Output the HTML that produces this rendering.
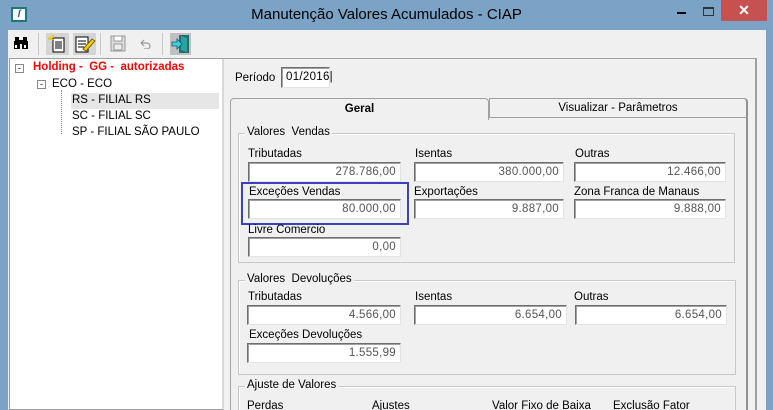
<!DOCTYPE html>
<html><head><meta charset="utf-8"><style>
*{margin:0;padding:0;box-sizing:border-box}
html,body{width:773px;height:410px;overflow:hidden}
body{background:#7aa3c5;font-family:"Liberation Sans",sans-serif;font-size:11.5px;color:#000;position:relative}
#w{position:absolute;left:0;top:0;width:773px;height:410px;overflow:hidden}
.a{position:absolute}
.inp{position:absolute;background:#fff;border-top:1px solid #6e6e6e;border-left:1px solid #6e6e6e;border-right:1px solid #e3e3e3;border-bottom:1px solid #e3e3e3;box-shadow:inset 1px 1px 0 #a0a0a0;height:20px;text-align:right;padding-right:4px;line-height:18px;color:#555;font-family:"Liberation Sans",sans-serif;letter-spacing:0.3px}
.grp{position:absolute;border:1px solid #c8c8c8;box-shadow:1px 1px 0 #fff inset}
.gl{position:absolute;background:#f0f0f0;padding:0 2px;top:-8px;left:6px}
.lb{position:absolute}
</style></head><body><div id="w">
<div class="a" style="left:0;top:0;width:773px;height:30px;background:#7aa3c5"></div>
<div class="a" style="left:11px;top:7px;width:16px;height:15px;background:#fff;border:2px solid #1e7a7a;font-weight:bold;font-style:italic;font-size:10px;color:#1e6b7a;text-align:center;line-height:11px">ſ</div>
<div class="a" style="left:0;top:6px;width:773px;text-align:center;font-size:15px;color:#000">Manutenção Valores Acumulados - CIAP</div>
<div class="a" style="left:677px;top:12px;width:9px;height:2px;background:#000"></div>
<div class="a" style="left:703px;top:7px;width:11px;height:9px;border:1px solid #333;border-top-width:2px"></div>
<div class="a" style="left:721px;top:0;width:46px;height:21px;background:#c75050;color:#fff;text-align:center;font-size:14px;line-height:21px;font-weight:bold">✕</div>
<div class="a" style="left:8px;top:30px;width:758px;height:380px;background:#f0f0f0"></div>
<svg class="a" style="left:13px;top:35px" width="16" height="16"><rect x="1" y="6" width="6" height="8" fill="#000"/><rect x="9" y="6" width="6" height="8" fill="#000"/><rect x="2" y="2" width="4" height="5" fill="#000"/><rect x="10" y="2" width="4" height="5" fill="#000"/><rect x="6" y="5" width="4" height="4" fill="#000"/><rect x="2" y="10" width="2" height="3" fill="#fff"/><rect x="11" y="10" width="2" height="3" fill="#fff"/></svg>
<div class="a" style="left:38px;top:33px;width:1px;height:22px;background:#c8c8c8"></div>
<div class="a" style="left:46px;top:33px;width:23px;height:22px;background:#d4d4d4"></div>
<svg class="a" style="left:48px;top:35px" width="20" height="18"><rect x="5" y="3" width="11" height="14" fill="#fff" stroke="#000"/><path d="M7 7h7M7 9h7M7 11h7M7 13h7" stroke="#000"/><path d="M2 2l3 3M5 0v3M0 4h3" stroke="#e8c000" stroke-width="1.5"/></svg>
<div class="a" style="left:73px;top:33px;width:23px;height:22px;background:#d4d4d4"></div>
<svg class="a" style="left:74px;top:35px" width="22" height="18"><rect x="2" y="2" width="12" height="15" fill="#fff" stroke="#000"/><path d="M4 6h8M4 9h8M4 12h6" stroke="#000"/><path d="M9 14l9-10 3 2-9 10z" fill="#f0d000" stroke="#806000"/></svg>
<div class="a" style="left:100px;top:33px;width:1px;height:22px;background:#c8c8c8"></div>
<svg class="a" style="left:110px;top:35px" width="16" height="17"><rect x="1" y="1" width="14" height="15" fill="#ddd" stroke="#999"/><rect x="4" y="1" width="8" height="5" fill="#fff" stroke="#999"/><rect x="4" y="9" width="8" height="6" fill="#eee" stroke="#999"/></svg>
<svg class="a" style="left:138px;top:37px" width="14" height="12"><path d="M3 6h6a3 3 0 0 1 0 6H6M3 6l3-3M3 6l3 3" fill="none" stroke="#999" stroke-width="1.2"/></svg>
<div class="a" style="left:162px;top:33px;width:1px;height:22px;background:#c8c8c8"></div>
<div class="a" style="left:170px;top:33px;width:21px;height:22px;background:#c0c0c0"></div>
<svg class="a" style="left:171px;top:34px" width="20" height="20"><rect x="8" y="1" width="10" height="18" fill="#207070"/><path d="M10 2l6 2v14l-6-2z" fill="#30a0a0"/><path d="M1 8h5V5l5 5-5 5v-3H1z" fill="#40d0e0" stroke="#006070" stroke-width="0.8"/></svg>
<div class="a" style="left:9px;top:58px;width:215px;height:352px;background:#fff;border:1px solid #a0a0a0;border-right:2px solid #d8d8d8"></div>
<div class="a" style="left:15px;top:64px;width:9px;height:9px;border:1px solid #888;background:#fff;font-size:9px;line-height:6px;text-align:center">-</div>
<div class="a" style="left:33px;top:61px;color:#ff0000;font-weight:bold;font-size:11.5px">Holding -&nbsp; GG -&nbsp; autorizadas</div>
<div class="a" style="left:37px;top:80px;width:9px;height:9px;border:1px solid #888;background:#fff;font-size:9px;line-height:6px;text-align:center">-</div>
<div class="a" style="left:52px;top:78px">ECO - ECO</div>
<div class="a" style="left:61px;top:90px;width:1px;height:44px;border-left:1px dotted #888"></div>
<div class="a" style="left:71px;top:93px;width:148px;height:16px;background:#e6e6e6"></div>
<div class="a" style="left:72px;top:94px">RS - FILIAL RS</div>
<div class="a" style="left:72px;top:110px">SC - FILIAL SC</div>
<div class="a" style="left:72px;top:126px">SP - FILIAL SÃO PAULO</div>
<div class="a" style="left:223px;top:58px;width:533px;height:352px;border-top:1px solid #a0a0a0;border-right:1px solid #fff"></div>
<div class="a" style="left:755px;top:58px;width:2px;height:352px;background:#a0a0a0"></div>
<div class="lb" style="left:235px;top:72px">Período</div>
<div class="inp" style="left:281px;top:67px;width:49px;height:21px;text-align:left;padding-left:4px;color:#000;line-height:19px">01/2016|</div>
<div class="a" style="left:230px;top:98px;width:259px;height:22px;background:#f0f0f0;border:1px solid #a0a0a0;border-bottom:none;border-radius:4px 4px 0 0;text-align:center;font-weight:bold;line-height:20px;z-index:2">Geral</div>
<div class="a" style="left:489px;top:98px;width:259px;height:20px;background:#f0f0f0;border:1px solid #a0a0a0;border-right:2px solid #909090;border-radius:0 4px 0 0;text-align:center;line-height:18px">Visualizar - Parâmetros</div>
<div class="a" style="left:230px;top:117px;width:518px;height:300px;border:1px solid #a0a0a0;border-right:2px solid #909090"></div>
<div class="grp" style="left:238px;top:133px;width:497px;height:130px"><span class="gl">Valores&nbsp; Vendas</span></div>
<div class="lb" style="left:248px;top:148px">Tributadas</div>
<div class="lb" style="left:415px;top:148px">Isentas</div>
<div class="lb" style="left:575px;top:148px">Outras</div>
<div class="inp" style="left:248px;top:162px;width:153px">278.786,00</div>
<div class="inp" style="left:414px;top:162px;width:150px">380.000,00</div>
<div class="inp" style="left:574px;top:162px;width:152px">12.466,00</div>
<div class="lb" style="left:249px;top:186px">Exceções Vendas</div>
<div class="lb" style="left:414px;top:186px">Exportações</div>
<div class="lb" style="left:574px;top:186px">Zona Franca de Manaus</div>
<div class="inp" style="left:248px;top:199px;width:153px">80.000,00</div>
<div class="inp" style="left:414px;top:199px;width:150px">9.887,00</div>
<div class="inp" style="left:574px;top:199px;width:152px">9.888,00</div>
<div class="a" style="left:241px;top:182px;width:168px;height:43px;border:2px solid #3b42c0"></div>
<div class="lb" style="left:248px;top:224px">Livre Comercio</div>
<div class="inp" style="left:248px;top:237px;width:153px">0,00</div>
<div class="grp" style="left:238px;top:280px;width:498px;height:95px"><span class="gl">Valores&nbsp; Devoluções</span></div>
<div class="lb" style="left:248px;top:291px">Tributadas</div>
<div class="lb" style="left:415px;top:291px">Isentas</div>
<div class="lb" style="left:574px;top:291px">Outras</div>
<div class="inp" style="left:247px;top:305px;width:154px">4.566,00</div>
<div class="inp" style="left:414px;top:305px;width:153px">6.654,00</div>
<div class="inp" style="left:575px;top:305px;width:152px">6.654,00</div>
<div class="lb" style="left:249px;top:329px">Exceções Devoluções</div>
<div class="inp" style="left:247px;top:343px;width:154px">1.555,99</div>
<div class="grp" style="left:238px;top:386px;width:498px;height:40px"><span class="gl">Ajuste de Valores</span></div>
<div class="lb" style="left:247px;top:400px">Perdas</div>
<div class="lb" style="left:372px;top:400px">Ajustes</div>
<div class="lb" style="left:492px;top:400px">Valor Fixo de Baixa</div>
<div class="lb" style="left:613px;top:400px">Exclusão Fator</div>
</div></body></html>
